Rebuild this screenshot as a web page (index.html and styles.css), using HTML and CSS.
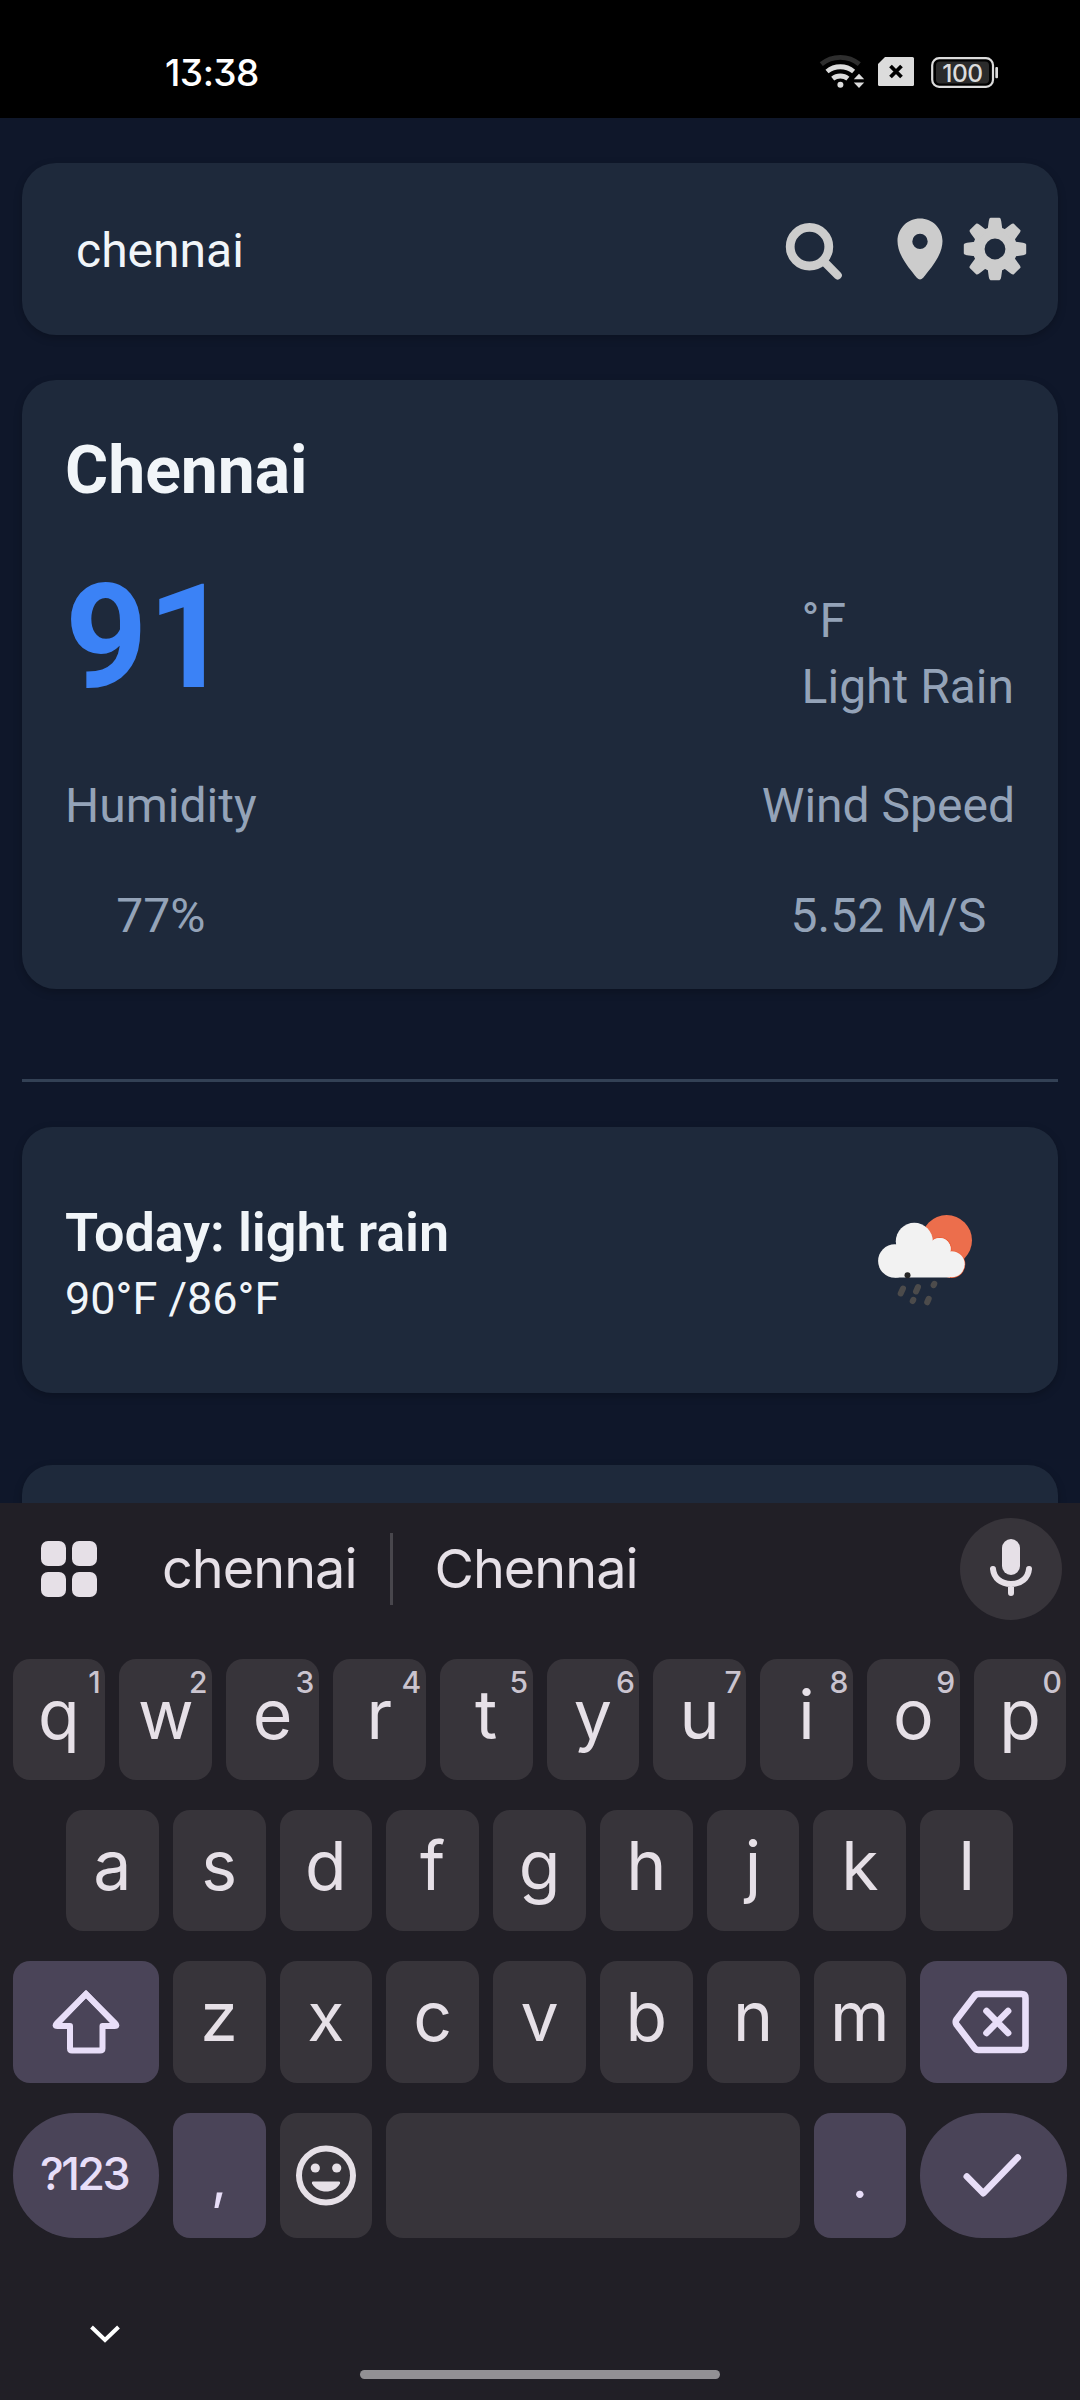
FILE: index.html
```html
<!DOCTYPE html>
<html lang="en">
<head>
<meta charset="utf-8">
<title>Weather</title>
<link rel="stylesheet" href="styles.css">
</head>
<body>
<header class="status">
  <span class="clock">13:38</span>
  <div class="status-icons">
    <svg width="180" height="40" viewBox="819 52 180 40">
      <g fill="none" stroke-width="4.8">
        <path stroke="#2e2e2e" d="M821.3 64.2A29.8 29.8 0 0 1 859.3 64.2"/>
        <path stroke="#dcdcdc" d="M827 71.5A21 21 0 0 1 853.6 71.5"/>
        <path stroke="#dcdcdc" d="M832.7 78.7A12 12 0 0 1 847.9 78.7"/>
      </g>
      <circle cx="840.4" cy="84.7" r="3" fill="#dcdcdc"/>
      <path d="M859 70L867 79V84L859 91L851 84V79Z" fill="#000"/>
      <path d="M859 73.8L864.2 79.2H853.8ZM853.8 82.4H864.2L859 88Z" fill="#dcdcdc"/>
      <path d="M885 57H912.5Q914 57 914 58.5V84.5Q914 86 912.5 86H879.5Q878 86 878 84.5V64Z" fill="#dcdcdc"/>
      <path d="M890.5 66L901.5 77M901.5 66L890.5 77" stroke="#000" stroke-width="3.8"/>
      <rect x="932.2" y="58.2" width="60.8" height="28.6" rx="7" fill="none" stroke="#dcdcdc" stroke-width="2.2"/>
      <rect x="936" y="61.6" width="53" height="21.8" rx="4" fill="#2b2b2b"/>
      <rect x="995.3" y="67" width="2.7" height="11.3" rx="1" fill="#dcdcdc"/>
      <text class="battery-level" x="962.5" y="81.6" text-anchor="middle">100</text>
    </svg>
  </div>
</header>

<main class="app">
  <section class="card search">
    <span class="query">chennai</span>
    <div class="search-icons">
      <svg width="58" height="62" viewBox="785 218.5 58 62">
        <g fill="none" stroke="#ccc" stroke-linecap="round">
          <circle cx="809.5" cy="247.2" r="19.3" stroke-width="8.8"/>
          <path d="M825 263L837.7 275.8" stroke-width="8.2"/>
        </g>
      </svg>
      <svg width="46" height="62" viewBox="896.5 218.5 46 62">
        <path fill="#ccc" fill-rule="evenodd" d="M919.5 219C907 219 897 229 897 241.5C897 256 909.5 269.5 916.3 278.3Q919.5 281.5 922.7 278.3C929.5 269.5 942 256 942 241.5C942 229 932 219 919.5 219ZM919.5 234.2A7.7 7.7 0 1 1 919.5 249.6A7.7 7.7 0 1 1 919.5 234.2Z"/>
      </svg>
      <svg width="64" height="64" viewBox="-32 -32 64 64">
        <defs><path id="tooth" d="M-7.6 -18L-6.2 -28Q-5.8 -31.2 -4.5 -31.2H4.5Q5.8 -31.2 6.2 -28L7.6 -18Z"/></defs>
        <circle r="16.3" fill="none" stroke="#ccc" stroke-width="11.8"/>
        <g fill="#ccc">
          <use href="#tooth"/><use href="#tooth" transform="rotate(45)"/>
          <use href="#tooth" transform="rotate(90)"/><use href="#tooth" transform="rotate(135)"/>
          <use href="#tooth" transform="rotate(180)"/><use href="#tooth" transform="rotate(225)"/>
          <use href="#tooth" transform="rotate(270)"/><use href="#tooth" transform="rotate(315)"/>
        </g>
      </svg>
    </div>
  </section>

  <section class="card current">
    <h1 class="city">Chennai</h1>
    <div class="reading">
      <span class="temp">91</span>
      <div class="summary"><div>°F</div><div>Light Rain</div></div>
    </div>
    <div class="metrics">
      <div class="metric"><div>Humidity</div><div>77%</div></div>
      <div class="metric"><div>Wind Speed</div><div>5.52 M/S</div></div>
    </div>
  </section>

  <hr class="divider">

  <section class="card day">
    <div>
      <h2 class="day-title">Today: light rain</h2>
      <div class="day-range">90°F /86°F</div>
    </div>
    <svg class="day-icon" width="100" height="100" viewBox="875 1210 100 100">
      <circle cx="946.7" cy="1240.3" r="25.3" fill="#ec6e4c"/>
      <g fill="#f2f2f2" stroke="#ec5a33" stroke-width="1.2">
        <circle cx="939.7" cy="1249" r="11.5"/><circle cx="951.7" cy="1264.3" r="13"/>
      </g>
      <g fill="#f2f2f2">
        <circle cx="894.8" cy="1261" r="16.7"/><circle cx="914.3" cy="1241.3" r="18.5"/>
        <circle cx="939.7" cy="1249" r="11"/><circle cx="951.7" cy="1264.3" r="13"/>
        <path d="M894.8 1247H950V1277.5H894.8Z"/>
      </g>
      <circle cx="907.5" cy="1275.3" r="3" fill="#262626"/>
      <g stroke="#4c4b4b" stroke-width="6" stroke-linecap="round">
        <path d="M903 1288.5L900.7 1293.5M918 1287L916 1291.5M934.3 1283.8L933.6 1285.2M913.3 1299.8L912.7 1301M928.7 1298.8L927.2 1302.3"/>
      </g>
    </svg>
  </section>

  <section class="card day"></section>
</main>

<section class="keyboard">
  <div class="suggestions">
    <svg class="apps" width="56" height="56" viewBox="0 0 56 56" fill="#e6e0e7">
      <rect width="25" height="25" rx="7"/><rect x="31" width="25" height="25" rx="7"/>
      <rect y="31" width="25" height="25" rx="7"/><rect x="31" y="31" width="25" height="25" rx="7"/>
    </svg>
    <span class="word first">chennai</span>
    <span class="separator"></span>
    <span class="word">Chennai</span>
    <span class="mic">
      <svg width="102" height="102" viewBox="960 1518 102 102">
        <rect x="1002" y="1539" width="18" height="36" rx="9" fill="#e6e0e7"/>
        <path d="M993 1569C993.8 1578 1001 1584 1011 1584S1028.2 1578 1029 1569M1011 1584V1593" fill="none" stroke="#e6e0e7" stroke-width="6" stroke-linecap="round"/>
      </svg>
    </span>
  </div>

  <div class="row">
    <span class="key">q<sup>1</sup></span><span class="key">w<sup>2</sup></span><span class="key">e<sup>3</sup></span><span class="key">r<sup>4</sup></span><span class="key">t<sup>5</sup></span><span class="key">y<sup>6</sup></span><span class="key">u<sup>7</sup></span><span class="key">i<sup>8</sup></span><span class="key">o<sup>9</sup></span><span class="key">p<sup>0</sup></span>
  </div>
  <div class="row">
    <span class="key">a</span><span class="key">s</span><span class="key">d</span><span class="key">f</span><span class="key">g</span><span class="key">h</span><span class="key">j</span><span class="key">k</span><span class="key">l</span>
  </div>
  <div class="row third">
    <span class="key accent wide">
      <svg width="76" height="76" viewBox="48 1984 76 76" fill="none" stroke="#e8def8" stroke-width="6" stroke-linejoin="round">
        <path stroke-linejoin="miter" d="M58.5 2022.5L86 1994L113.5 2022.5"/>
        <path d="M86 1994L57 2023Q54 2026 57.5 2026H70V2048.5Q70 2050.5 72 2050.5H100Q102.5 2050.5 102.5 2048.5V2026H114.5Q118 2026 115 2023Z"/>
      </svg>
    </span>
    <span class="key">z</span><span class="key">x</span><span class="key">c</span><span class="key">v</span><span class="key">b</span><span class="key">n</span><span class="key">m</span>
    <span class="key accent wide">
      <svg width="84" height="70" viewBox="951.5 1987 84 70" fill="none" stroke="#e8def8" stroke-width="6.6" stroke-linejoin="round" stroke-linecap="round">
        <path d="M979 1994H1022Q1026 1994 1026 1998V2046Q1026 2050 1022 2050H979Q976.5 2050 975 2048L957 2024.5Q955.5 2022 957 2019.5L975 1996Q976.5 1994 979 1994Z"/>
        <path d="M987 2011L1008.6 2033M1008.6 2011L987 2033"/>
      </svg>
    </span>
  </div>
  <div class="row bottom">
    <span class="key accent wide pill symbols">?123</span>
    <span class="key accent mark">,</span>
    <span class="key">
      <svg width="62" height="62" viewBox="-31 -31 62 62">
        <circle r="27" fill="none" stroke="#e6e0e7" stroke-width="6"/>
        <circle cx="-10.7" cy="-7.5" r="4.6" fill="#e6e0e7"/><circle cx="10.7" cy="-7.5" r="4.6" fill="#e6e0e7"/>
        <path d="M-13 6H13Q14.6 6 14 8C11 13.5 5.5 16 0 16S-11 13.5 -14 8Q-14.6 6 -13 6Z" fill="#e6e0e7"/>
      </svg>
    </span>
    <span class="key space"></span>
    <span class="key accent mark">.</span>
    <span class="key accent wide pill">
      <svg width="64" height="50" viewBox="961.5 2150 64 50" fill="none" stroke="#e8def8" stroke-width="6.6" stroke-linecap="round" stroke-linejoin="round">
        <path d="M967.3 2176L983.8 2192.7L1018.3 2157"/>
      </svg>
    </span>
  </div>
  <svg class="collapse" width="34" height="22" viewBox="0 0 34 22">
    <path d="M3.5 4L17 17L30.5 4" fill="none" stroke="#fff" stroke-width="4"/>
  </svg>
  <div class="home"></div>
</section>
</body>
</html>
```

FILE: styles.css
```css
* { box-sizing: border-box; }
body {
  margin: 0;
  width: 1080px;
  height: 2400px;
  overflow: hidden;
  background: #0f172a;
  color: #f1f5f9;
  font-family: Roboto, sans-serif;
}
svg { display: block; flex: none; }
h1, h2 { margin: 0; }

.status {
  height: 118px;
  padding: 52px 81px 0 165px;
  display: flex;
  justify-content: space-between;
  background: #000;
}
.clock {
  font: 500 37px/42px Inter, sans-serif;
  font-feature-settings: "cv09";
  letter-spacing: -.5px;
  color: #fff;
}
.battery-level { font: 500 24.5px Inter, sans-serif; letter-spacing: -.5px; fill: #dcdcdc; }

.app {
  height: 1385px;
  padding: 45px 22px 0;
  overflow: hidden;
}
.card {
  background: #1e293b;
  border-radius: 34px;
  box-shadow: 0 3px 9px rgba(0, 0, 0, .22);
}
.search {
  height: 172px;
  padding: 0 31px 0 54px;
  display: flex;
  align-items: center;
  justify-content: space-between;
}
.query { font-size: 48px; padding-top: 3px; }
.search-icons { display: flex; align-items: center; gap: 20px; }
.search-icons svg:first-child { margin-right: 34px; }

.current {
  height: 609px;
  margin-top: 45px;
  padding: 52px 43px 0;
  font-size: 48px;
  line-height: 66px;
  color: #94a3b8;
}
.city { font-size: 66px; line-height: 78px; color: #f1f5f9; }
.reading {
  margin-top: 43px;
  display: flex;
  align-items: flex-end;
  justify-content: space-between;
}
.summary { margin: 0 1px 3px 0; }
.temp { font-size: 144px; line-height: 170px; font-weight: 700; color: #3b82f6; }
.metrics { margin-top: 50px; display: flex; justify-content: space-between; }
.metric { display: flex; flex-direction: column; align-items: center; gap: 44px; }

.divider { height: 3px; margin: 90px 0 45px; border: 0; background: #334155; }

.day {
  height: 266px;
  margin-bottom: 72px;
  padding: 73px 83px 0 43px;
  display: flex;
  justify-content: space-between;
  border-radius: 30px;
}
.day-title { font-size: 54px; line-height: 66px; font-weight: 600; letter-spacing: -.1px; }
.day-range { font-size: 45px; line-height: 66px; }
.day-icon { margin-top: 10px; }

.keyboard {
  height: 897px;
  padding: 0 13.5px 0 12.5px;
  background: #211f26;
  color: #e6e0e7;
  font-family: Inter, sans-serif;
  display: flex;
  flex-direction: column;
}
.suggestions {
  height: 132px;
  margin-bottom: 24px;
  padding-left: 28.5px;
  display: flex;
  align-items: center;
}
.word { font-size: 54px; line-height: 64px; letter-spacing: -1px; }
.first { margin-left: 65px; }
.separator { width: 3px; height: 72px; margin: 0 41px 0 34px; background: #48464c; }
.mic { margin: 0 4.5px 0 auto; border-radius: 50%; background: #37343a; }

.row { display: flex; justify-content: center; gap: 14px; margin-bottom: 30px; }
.key {
  position: relative;
  width: 92.8px;
  height: 121px;
  border-radius: 17px;
  background: #37343a;
  font-size: 68px;
  line-height: 110px;
  text-align: center;
}
.key sup {
  position: absolute;
  top: 5px;
  right: 4.5px;
  font-size: 30px;
  font-weight: 500;
  line-height: 36px;
  color: #cac4cf;
}
.third .key { height: 122px; }
.bottom .key { height: 125px; line-height: 121px; }
.key svg { margin: 0 auto; height: 100%; }
.key.wide { width: auto; flex: 1; }
.key.space { width: auto; flex: 0 0 413.2px; }
.key.accent { background: #4a4458; color: #e8def8; }
.key.pill { border-radius: 62px; }
.bottom .mark { font-size: 56px; line-height: 131px; }
.bottom .symbols {
  text-indent: -3px;
  font-size: 45px;
  line-height: 122px;
  font-weight: 500;
  letter-spacing: -2.5px;
}

.collapse { margin: 55px 0 0 75.5px; }
.home { width: 360px; height: 9px; margin: 25px auto 0; border-radius: 5px; background: #929094; }
```
